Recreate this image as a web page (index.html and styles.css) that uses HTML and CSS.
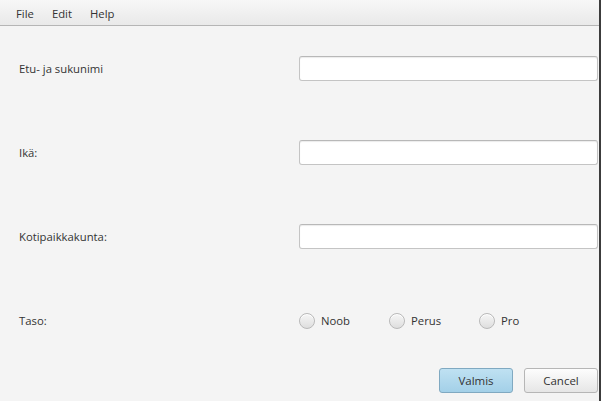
FILE: index.html
```html
<!DOCTYPE html>
<html>
<head>
<meta charset="utf-8">
<link rel="stylesheet" href="styles.css">
</head>
<body>
<div class="window">
  <div class="app">
    <div class="menubar">
      <span class="menu-item">File</span>
      <span class="menu-item">Edit</span>
      <span class="menu-item">Help</span>
    </div>
    <div class="form">
      <label class="label">Etu- ja sukunimi</label>
      <div class="field"></div>
      <label class="label">Ikä:</label>
      <div class="field"></div>
      <label class="label">Kotipaikkakunta:</label>
      <div class="field"></div>
      <label class="label">Taso:</label>
      <div class="radios">
        <span class="radio"><span class="dot"></span>Noob</span>
        <span class="radio"><span class="dot"></span>Perus</span>
        <span class="radio"><span class="dot"></span>Pro</span>
      </div>
    </div>
    <div class="buttons">
      <button class="btn btn-default">Valmis</button>
      <button class="btn">Cancel</button>
    </div>
  </div>
  <div class="edge"></div>
</div>
</body>
</html>
```
FILE: styles.css
```css
html, body {
  margin: 0;
  padding: 0;
}
body {
  width: 601px;
  height: 401px;
  overflow: hidden;
  font-family: "Open Sans", "Noto Sans", sans-serif;
  font-size: 11.3px;
  color: #333333;
}
.window {
  display: flex;
  height: 401px;
}
.app {
  width: 599px;
  background: #f4f4f4;
  display: flex;
  flex-direction: column;
}
.edge {
  width: 2px;
  background: #3c3c3c;
}
.menubar {
  height: 26px;
  box-sizing: border-box;
  padding-top: 3px;
  border-bottom: 1px solid #b5b5b5;
  background: linear-gradient(#f7f7f7, #e9e9e9);
  display: flex;
  align-items: center;
  padding-left: 7px;
}
.menu-item {
  padding: 0 9px;
  line-height: 16px;
}
.form {
  display: grid;
  grid-template-columns: 280px 299px;
  grid-auto-rows: 25px;
  row-gap: 59px;
  padding: 30px 0 0 19px;
}
.label {
  display: flex;
  align-items: center;
  margin-top: -1px;
}
.field {
  background: #ffffff;
  border: 1px solid #c4c4c4;
  border-top-color: #b8b8b8;
  border-radius: 3px;
  box-sizing: border-box;
  box-shadow: inset 0 1px 1px #ececec;
}
.radios {
  display: flex;
  align-items: center;
}
.radio {
  width: 90px;
  display: flex;
  align-items: center;
  gap: 6px;
}
.dot {
  width: 16px;
  height: 16px;
  box-sizing: border-box;
  border-radius: 50%;
  border: 1px solid #b9b9b9;
  background: linear-gradient(#f6f6f6, #dedede);
  box-shadow: inset 0 1px 0 #ffffff;
}
.buttons {
  display: flex;
  justify-content: flex-end;
  gap: 11px;
  padding: 35px 1px 0 0;
}
.btn {
  width: 74px;
  height: 25px;
  box-sizing: border-box;
  font-family: "Open Sans", "Noto Sans", sans-serif;
  font-size: 11.5px;
  color: #333333;
  border: 1px solid #b6b6b6;
  border-radius: 3px;
  background: linear-gradient(#fdfdfd, #e6e6e6);
  padding: 0;
}
.btn-default {
  border-color: #80a9c1;
  background: linear-gradient(#bfe1f2, #a3d0e8);
}
```
